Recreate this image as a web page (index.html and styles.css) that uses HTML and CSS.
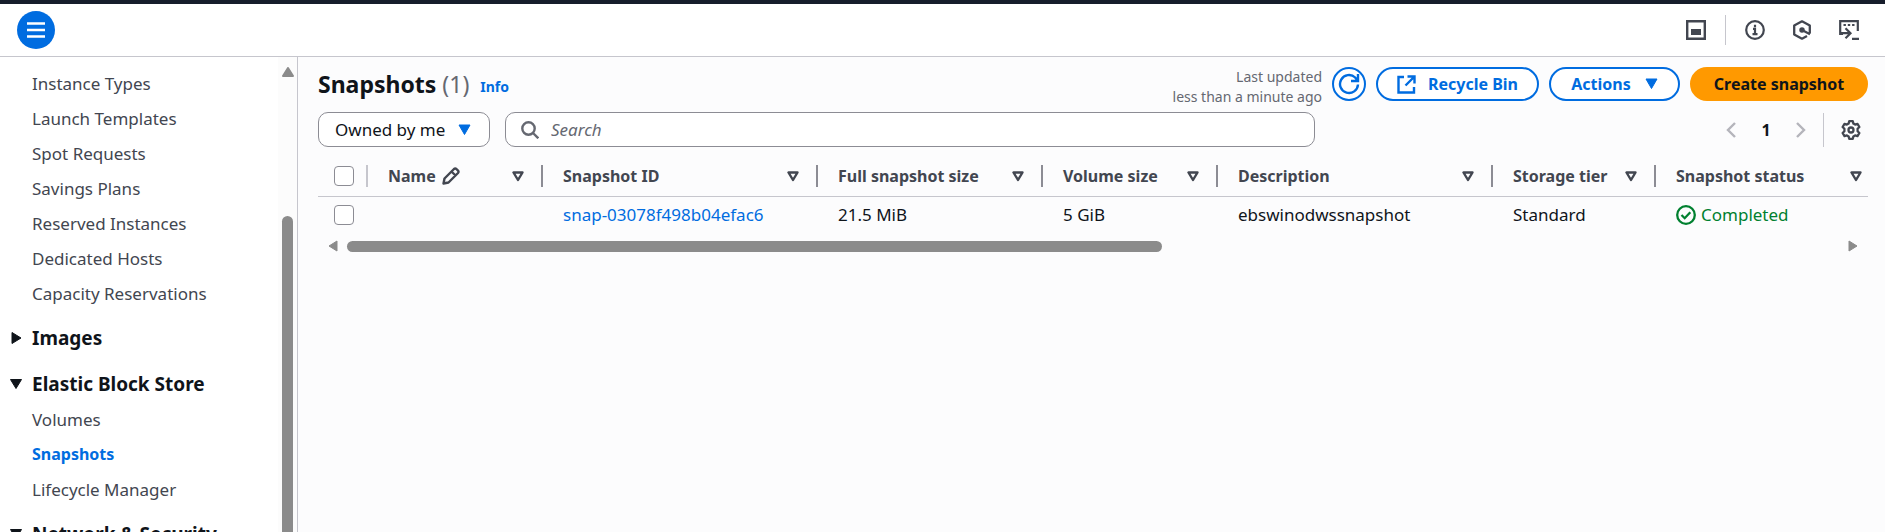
FILE: index.html
```html
<!DOCTYPE html>
<html lang="en">
<head>
<meta charset="utf-8">
<title>Snapshots</title>
<link rel="stylesheet" href="styles.css">
</head>
<body>
<div class="app">
  <header class="topbar">
    <button class="menu-button" type="button" aria-label="Toggle navigation">
      <svg width="18" height="16" viewBox="0 0 18 16" fill="none" stroke="currentColor" stroke-width="2.4"><path d="M0 1.500h18M0 8h18M0 14.500h18"/></svg>
    </button>
    <div class="tools">
      <button class="tool" type="button" aria-label="Split panel">
        <svg width="20" height="20" viewBox="0 0 20 20"><path d="M1.200 1.200h17.600v17.600h-17.600z" fill="none" stroke="currentColor" stroke-width="2.400"/><path d="M5 9h10v6h-10z" fill="currentColor"/></svg>
      </button>
      <span class="tool-divider"></span>
      <button class="tool" type="button" aria-label="Info panel">
        <svg width="20" height="20" viewBox="0 0 20 20" fill="none" stroke="currentColor" stroke-width="2.200"><circle cx="10" cy="10" r="8.800"/><path d="M8 8.800h2v5.200M7.500 14.200h5M10 4.800v2.400"/></svg>
      </button>
      <button class="tool" type="button" aria-label="Amazon Q">
        <svg width="20" height="20" viewBox="0 0 20 20" fill="none" stroke="currentColor" stroke-width="2.300" stroke-linejoin="round"><path d="M17.800 13.500V5.600L10 1.300 2.200 5.600v8.800L10 18.700l5-2.700M10 10l8 4.200"/><circle cx="10" cy="10" r="1.600" fill="currentColor"/></svg>
      </button>
      <button class="tool" type="button" aria-label="CloudShell">
        <svg width="20" height="20" viewBox="0 0 20 20" fill="none" stroke="currentColor" stroke-width="2.200"><path d="M4 14H1.200V1.200h17.600V11M2 13.200h8.500M6.500 8.200l5 5-5 5M13 18.800h7"/><path d="M4.500 5h2.400M8.800 5h2.400M13.100 5h2.400"/></svg>
      </button>
    </div>
  </header>

  <div class="body">
    <aside class="sidebar">
      <nav class="nav" aria-label="EC2">
        <ul class="nav-list">
          <li><a class="nav-link" href="#">Instance Types</a></li>
          <li><a class="nav-link" href="#">Launch Templates</a></li>
          <li><a class="nav-link" href="#">Spot Requests</a></li>
          <li><a class="nav-link" href="#">Savings Plans</a></li>
          <li><a class="nav-link" href="#">Reserved Instances</a></li>
          <li><a class="nav-link" href="#">Dedicated Hosts</a></li>
          <li><a class="nav-link" href="#">Capacity Reservations</a></li>
        </ul>
        <button class="nav-heading" type="button" aria-expanded="false">
          <svg class="caret" width="12" height="12" viewBox="0 0 12 12"><path d="M2 .5l9 5.500-9 5.500z" fill="currentColor" stroke="currentColor" stroke-linejoin="round"/></svg>Images
        </button>
        <button class="nav-heading" type="button" aria-expanded="true">
          <svg class="caret" width="12" height="12" viewBox="0 0 12 12"><path d="M.5 1.500h11L6 10.500z" fill="currentColor" stroke="currentColor" stroke-linejoin="round"/></svg>Elastic Block Store
        </button>
        <ul class="nav-list">
          <li><a class="nav-link" href="#">Volumes</a></li>
          <li><a class="nav-link current" href="#" aria-current="page">Snapshots</a></li>
          <li><a class="nav-link" href="#">Lifecycle Manager</a></li>
        </ul>
        <button class="nav-heading" type="button" aria-expanded="true">
          <svg class="caret" width="12" height="12" viewBox="0 0 12 12"><path d="M.5 1.500h11L6 10.500z" fill="currentColor" stroke="currentColor" stroke-linejoin="round"/></svg>Network &amp; Security
        </button>
      </nav>
      <div class="vscroll">
        <svg width="12" height="10" viewBox="0 0 12 10"><path d="M6 1l5 8H1z" fill="currentColor" stroke="currentColor" stroke-width="2" stroke-linejoin="round"/></svg>
        <div class="vthumb"></div>
      </div>
    </aside>

    <main class="content">
      <div class="title-row">
        <h1 class="title">Snapshots <span class="count">(1)</span></h1>
        <a class="info" href="#">Info</a>
        <p class="updated">Last updated<br>less than a minute ago</p>
        <div class="actions">
          <button class="btn btn-round" type="button" aria-label="Refresh">
            <svg width="22" height="22" viewBox="0 0 22 22" fill="none" stroke="currentColor" stroke-width="2.400"><path d="M20 11.500a9 9 0 1 1-2.800-7l2.500 3.300M20 1v7h-7"/></svg>
          </button>
          <button class="btn btn-bin" type="button">
            <svg width="19" height="19" viewBox="0 0 19 19" fill="none" stroke="currentColor" stroke-width="2.400"><path d="M7 2H1.500v15.500H17V12M10.500 1.500h7v7M17 2l-8.500 8.500"/></svg>Recycle Bin
          </button>
          <button class="btn btn-menu" type="button">Actions
            <svg width="13" height="12" viewBox="0 0 13 12"><path d="M1 1h11L6.500 10.500z" fill="currentColor" stroke="currentColor" stroke-linejoin="round"/></svg>
          </button>
          <button class="btn btn-primary" type="button">Create snapshot</button>
        </div>
      </div>

      <div class="filter-row">
        <div class="owner">
          <select class="owner-select" aria-label="Owner filter"><option>Owned by me</option></select>
          <svg class="owner-caret" width="13" height="12" viewBox="0 0 13 12"><path d="M1 1h11L6.500 10.500z" fill="currentColor" stroke="currentColor" stroke-linejoin="round"/></svg>
        </div>
        <label class="search">
          <svg width="18" height="18" viewBox="0 0 18 18" fill="none" stroke="currentColor" stroke-width="2.400"><circle cx="7.500" cy="7.500" r="6.200"/><path d="M12 12l5.300 5.300"/></svg>
          <input class="search-input" type="search" placeholder="Search" aria-label="Search">
        </label>
        <div class="pager">
          <button class="page-arrow" type="button" aria-label="Previous page" disabled>
            <svg width="10" height="16" viewBox="0 0 10 16" fill="none" stroke="currentColor" stroke-width="2.400"><path d="M9 1L2 8l7 7"/></svg>
          </button>
          <button class="page" type="button">1</button>
          <button class="page-arrow" type="button" aria-label="Next page" disabled>
            <svg width="10" height="16" viewBox="0 0 10 16" fill="none" stroke="currentColor" stroke-width="2.400"><path d="M1 1l7 7-7 7"/></svg>
          </button>
          <span class="pager-divider"></span>
          <button class="settings" type="button" aria-label="Preferences">
            <svg width="20" height="20" viewBox="0 0 20 20" fill="none" stroke="currentColor" stroke-width="2.300" stroke-linejoin="round"><path d="M8.200 1.200h3.600l.6 2.400 1.700 1 2.400-.7 1.900 3.100-1.800 1.800v2.400l1.800 1.800-1.900 3.100-2.400-.7-1.700 1-.6 2.400H8.200l-.6-2.400-1.700-1-2.400.7L1.600 13l1.800-1.800V8.800L1.600 7l1.900-3.100 2.400.7 1.700-1z"/><circle cx="10" cy="10" r="2.500"/></svg>
          </button>
        </div>
      </div>

      <table class="grid">
        <colgroup>
          <col class="col-check"><col class="col-m"><col class="col-l"><col class="col-n"><col class="col-m"><col class="col-l"><col class="col-s"><col>
        </colgroup>
        <thead>
          <tr>
            <th><div class="check"><input type="checkbox" aria-label="Select all"></div></th>
            <th><div class="head"><span class="name">Name <svg width="18" height="18" viewBox="0 0 18 18" fill="none" stroke="currentColor" stroke-width="2.400" stroke-linejoin="round"><path d="M1.500 16.500l1-5L12 2q1.200-1 2.400 0l1.600 1.600q1 1.200 0 2.400l-9.500 9.500zM9.500 4.500l4 4"/></svg></span><svg class="sort" width="12" height="11" viewBox="0 0 12 11"><path d="M1.500 1.500h9L6 9z"/></svg></div></th>
            <th><div class="head">Snapshot ID<svg class="sort" width="12" height="11" viewBox="0 0 12 11"><path d="M1.500 1.500h9L6 9z"/></svg></div></th>
            <th><div class="head">Full snapshot size<svg class="sort" width="12" height="11" viewBox="0 0 12 11"><path d="M1.500 1.500h9L6 9z"/></svg></div></th>
            <th><div class="head">Volume size<svg class="sort" width="12" height="11" viewBox="0 0 12 11"><path d="M1.500 1.500h9L6 9z"/></svg></div></th>
            <th><div class="head">Description<svg class="sort" width="12" height="11" viewBox="0 0 12 11"><path d="M1.500 1.500h9L6 9z"/></svg></div></th>
            <th><div class="head">Storage tier<svg class="sort" width="12" height="11" viewBox="0 0 12 11"><path d="M1.500 1.500h9L6 9z"/></svg></div></th>
            <th><div class="head head-last">Snapshot status<svg class="sort" width="12" height="11" viewBox="0 0 12 11"><path d="M1.500 1.500h9L6 9z"/></svg></div></th>
          </tr>
        </thead>
        <tbody>
          <tr>
            <td><div class="check-cell"><input type="checkbox" aria-label="Select snap-03078f498b04efac6"></div></td>
            <td></td>
            <td><a class="link" href="#">snap-03078f498b04efac6</a></td>
            <td>21.5 MiB</td>
            <td>5 GiB</td>
            <td>ebswinodwssnapshot</td>
            <td>Standard</td>
            <td><span class="status"><svg width="20" height="20" viewBox="0 0 20 20" fill="none" stroke="currentColor" stroke-width="2.300"><circle cx="10" cy="10" r="8.800"/><path d="M5.500 10l3.200 3.200 5.600-6"/></svg>Completed</span></td>
          </tr>
        </tbody>
      </table>
      <div class="hscroll">
        <svg width="10" height="12" viewBox="0 0 10 12"><path d="M1 6l8-5v10z" fill="currentColor" stroke="currentColor" stroke-linejoin="round"/></svg>
        <div class="htrack"><div class="hthumb" style="width: 54.6%"></div></div>
        <svg width="10" height="12" viewBox="0 0 10 12"><path d="M9 6L1 1v10z" fill="currentColor" stroke="currentColor" stroke-linejoin="round"/></svg>
      </div>
    </main>
  </div>
</div>
</body>
</html>
```
FILE: styles.css
```css
* {
  box-sizing: border-box;
}

body {
  margin: 0;
  font: 17px/24px "Noto Sans", "Open Sans", sans-serif;
  color: #0f141a;
  background: #fcfcfd;
}

button,
input,
select {
  font: inherit;
  color: inherit;
}

button {
  display: flex;
  align-items: center;
  justify-content: center;
  padding: 0;
  border: 0;
  background: none;
}

svg {
  flex: none;
  display: block;
}

a {
  text-decoration: none;
}

.app {
  display: flex;
  flex-direction: column;
  height: 100vh;
  overflow: hidden;
}

.topbar {
  flex: none;
  display: flex;
  align-items: center;
  justify-content: space-between;
  height: 57px;
  padding: 0 26px 0 17px;
  border-top: 4px solid #161d2b;
  border-bottom: 1px solid #c6c6cd;
  background: #fff;
}

.menu-button {
  width: 38px;
  height: 38px;
  border-radius: 50%;
  background: #006ce0;
  color: #fff;
}

.tools {
  display: flex;
  align-items: center;
  gap: 27px;
  color: #424650;
}

.tool-divider {
  width: 1px;
  height: 30px;
  margin: 0 -8px;
  background: #c6c6cd;
}

.body {
  flex: 1;
  display: flex;
  min-height: 0;
}

.sidebar {
  flex: none;
  display: flex;
  width: 298px;
  border-right: 1px solid #c6c6cd;
  background: #fff;
  overflow: hidden;
}

.nav {
  flex: 1;
  padding-top: 9px;
}

.nav-list {
  margin: 0;
  padding: 0;
  list-style: none;
}

.nav-link {
  display: block;
  padding-left: 32px;
  line-height: 35px;
  color: #424650;
}

.nav-link.current {
  font-size: 16px;
  font-weight: 700;
  color: #006ce0;
}

.nav-heading {
  justify-content: flex-start;
  gap: 10px;
  height: 36px;
  margin-top: 10px;
  padding-left: 10px;
  font-size: 19px;
  font-weight: 700;
}

.nav-list + .nav-heading {
  margin-top: 9px;
}

.vscroll {
  display: flex;
  flex-direction: column;
  align-items: center;
  width: 19px;
  padding-top: 10px;
  background: #fcfcfc;
  color: #8b8b8b;
}

.vthumb {
  flex: 1;
  width: 11px;
  margin-top: 139px;
  border-radius: 6px 6px 0 0;
  background: #8b8b8b;
}

.content {
  flex: 1;
  min-width: 0;
  padding: 10px 17px 0 20px;
}

.title-row {
  display: flex;
  align-items: center;
  height: 34px;
}

.title {
  margin: 0;
  font-size: 23px;
  line-height: 34px;
}

.count {
  font-weight: 400;
  color: #656871;
}

.info {
  margin: 6px 0 0 11px;
  font-size: 14px;
  font-weight: 700;
  color: #006ce0;
}

.updated {
  margin: 6px 10px 0 auto;
  font-size: 14px;
  line-height: 20px;
  text-align: right;
  color: #656871;
}

.actions {
  display: flex;
  gap: 10px;
}

.btn {
  height: 34px;
  border: 2px solid #006ce0;
  border-radius: 17px;
  background: #fff;
  font-size: 16px;
  font-weight: 700;
  color: #006ce0;
  white-space: nowrap;
}

.btn-round {
  width: 34px;
}

.btn-bin {
  gap: 12px;
  width: 163px;
}

.btn-menu {
  gap: 14px;
  width: 131px;
}

.btn-primary {
  width: 178px;
  border-color: #ff9900;
  background: #ff9900;
  color: #0f141a;
}

.filter-row {
  display: flex;
  align-items: center;
  margin-top: 11px;
}

.owner {
  position: relative;
  width: 172px;
}

.owner-select {
  display: block;
  width: 100%;
  height: 35px;
  padding: 0 16px;
  border: 1px solid #8c8c94;
  border-radius: 10px;
  appearance: none;
  background: #fff;
}

.owner-caret {
  position: absolute;
  top: 12px;
  right: 19px;
  color: #006ce0;
  pointer-events: none;
}

.search {
  flex: 0 1 810px;
  display: flex;
  align-items: center;
  gap: 12px;
  height: 35px;
  margin-left: 15px;
  padding: 0 15px;
  border: 1px solid #8c8c94;
  border-radius: 10px;
  background: #fff;
  color: #656871;
}

.search-input {
  flex: 1;
  min-width: 0;
  padding: 0;
  border: 0;
  outline: 0;
  background: none;
}

.search-input::placeholder {
  font-style: italic;
  color: #656871;
  opacity: 1;
}

.pager {
  display: flex;
  align-items: center;
  margin-left: auto;
  padding-right: 7px;
}

.page-arrow {
  color: #b4b4bb;
}

.page {
  width: 60px;
  font-size: 16px;
  font-weight: 700;
}

.pager-divider {
  width: 1px;
  height: 34px;
  margin: 0 17px;
  background: #c6c6cd;
}

.settings {
  color: #424650;
}

.grid {
  width: 100%;
  margin-top: 10px;
  border-collapse: collapse;
  table-layout: fixed;
}

.col-check {
  width: 50px;
}

.col-s {
  width: 163px;
}

.col-m {
  width: 175px;
}

.col-n {
  width: 225px;
}

.col-l {
  width: 275px;
}

th {
  height: 39px;
  padding: 0;
  border-bottom: 1px solid #c6c6cd;
  font-size: 16px;
  text-align: left;
  color: #424650;
  white-space: nowrap;
}

td {
  height: 38px;
  padding: 0 0 0 20px;
  white-space: nowrap;
}

td:first-child {
  padding: 0;
}

.check,
.head {
  display: flex;
  align-items: center;
  justify-content: space-between;
  height: 22px;
  padding: 0 17px 0 20px;
  border-right: 2px solid #8c8c94;
}

.check {
  padding: 0 0 0 16px;
  border-color: #c6c6cd;
}

.check-cell {
  display: flex;
  padding-left: 16px;
}

.head-last {
  padding-right: 6px;
  border-right: 0;
}

.name {
  display: flex;
  align-items: center;
  gap: 6px;
}

.sort {
  fill: none;
  stroke: #424650;
  stroke-width: 2.4px;
  stroke-linejoin: round;
}

input[type="checkbox"] {
  width: 20px;
  height: 20px;
  margin: 0;
  border: 1px solid #8c8c94;
  border-radius: 4px;
  appearance: none;
  background: #fff;
}

.link {
  color: #006ce0;
}

.status {
  display: flex;
  align-items: center;
  gap: 5px;
  color: #00802f;
}

.hscroll {
  display: flex;
  align-items: center;
  gap: 9px;
  padding: 6px 10px 0;
  color: #8b8b8b;
}

.htrack {
  flex: 1;
}

.hthumb {
  height: 11px;
  border-radius: 6px;
  background: #8b8b8b;
}
```
